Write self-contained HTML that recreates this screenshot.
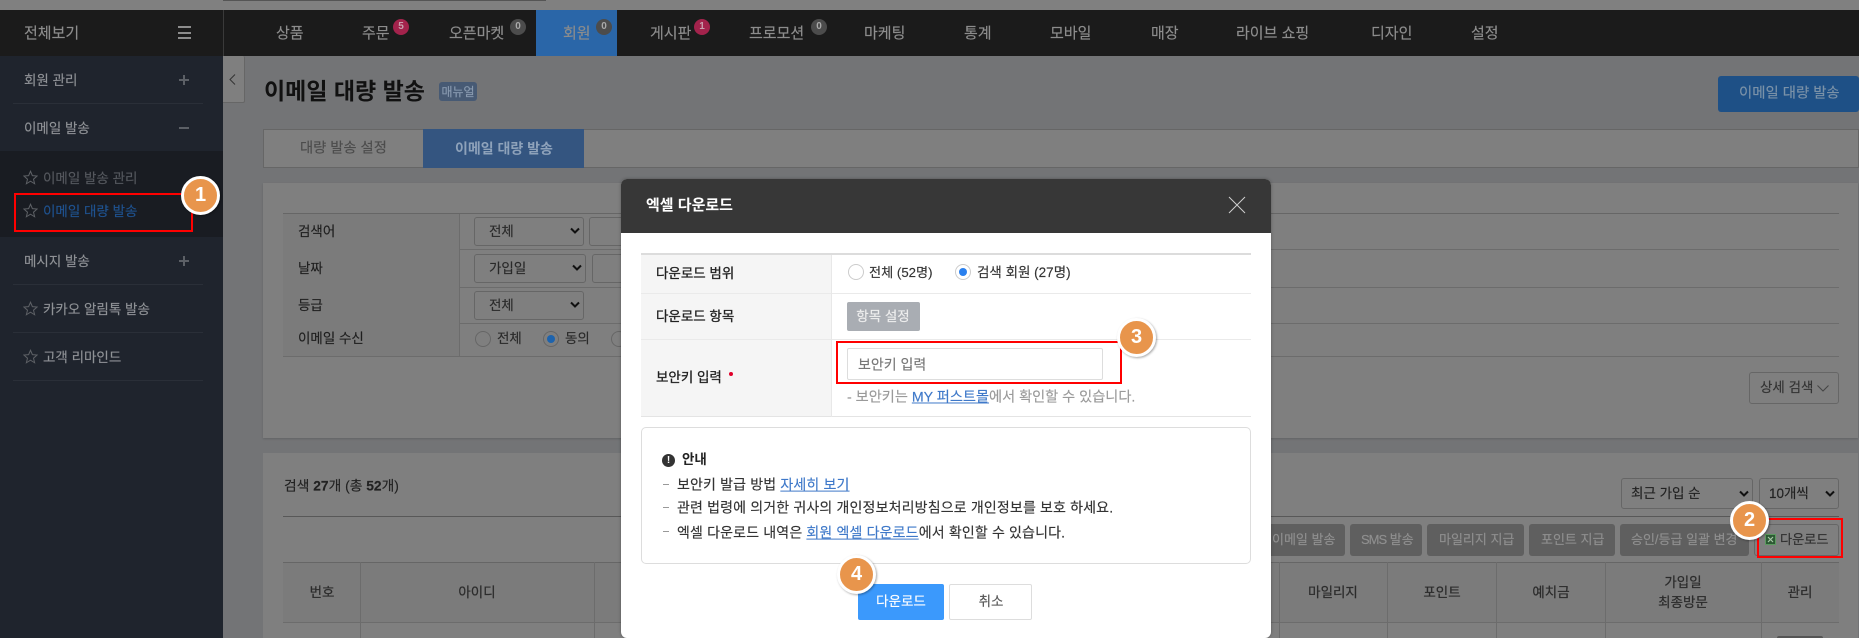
<!DOCTYPE html>
<html lang="ko"><head><meta charset="utf-8"><title>엑셀 다운로드</title>
<style>
html,body{margin:0;padding:0;width:1859px;height:638px;overflow:hidden;background:#737476}
body{position:relative;font-family:"Liberation Sans","Noto Sans CJK KR",sans-serif;font-size:13px;color:#2a2a2a}
div,span,svg{box-sizing:border-box}
.b{position:absolute}
.t{position:absolute;white-space:nowrap;transform:translateY(calc(-50% + 1px));line-height:1.2;-webkit-text-stroke:.15px currentColor}
.c{transform:translate(-50%,calc(-50% + 1px));text-align:center}
.nav{font-size:15px;color:#8d8d8d;top:33px}
.bd{position:absolute;width:16px;height:16px;border-radius:50%;top:19px;font-size:10px;line-height:16px;text-align:center;font-weight:bold;color:#a9a9a9;background:#4c4c4c}
.bd.r{background:#a3234c;color:#c9a0ae}
.side{font-size:13.5px;color:#8f9296;left:24px}
.dv{position:absolute;left:13px;width:190px;height:1px;background:#2a2f38}
.hl{position:absolute;left:283px;width:1556px;height:1px;background:#666}
.sel{position:absolute;border:1px solid #666;border-radius:3px;background:#7f7f7f}
.rd{position:absolute;width:16px;height:16px;border-radius:50%;border:1px solid #666}
.rd.on::after{content:"";position:absolute;left:3px;top:3px;width:8px;height:8px;border-radius:50%;background:#1d63ad}
.btn{position:absolute;top:524px;height:32px;background:#5f5f5f;border-radius:3px}
.bt{color:#8f8f8f;font-size:13px;top:540px}
.th{font-size:13.5px;color:#2c2c2c;-webkit-text-stroke:.25px currentColor}
.num{position:absolute;width:39px;height:39px;border-radius:50%;background:#e8954c;border:3px solid #fff;box-shadow:1px 1px 2px rgba(0,0,0,.35);color:#fff;font-size:20px;font-weight:bold;text-align:center;line-height:33px;z-index:9}
.red{position:absolute;border:2px solid #f00;z-index:8}
.mrd{position:absolute;width:16px;height:16px;border-radius:50%;border:1px solid #ccc;background:#fff}
a{color:#3f79c9;text-decoration:underline}
.ln{font-size:14px;color:#333;letter-spacing:.15px}
.lb{font-size:13.5px;color:#222;-webkit-text-stroke:.3px currentColor}
.ds{position:absolute;left:663px;width:6px;height:1px;background:#999}
</style></head><body>

<!-- top strip -->
<div class="b" style="left:0;top:0;width:1859px;height:10px;background:#808080"></div>
<div class="b" style="left:223px;top:0;width:323px;height:1px;background:#555"></div>

<!-- top nav -->
<div class="b" style="left:0;top:10px;width:1859px;height:46px;background:#1b1b1b"></div>
<div class="b" style="left:223px;top:10px;width:1px;height:46px;background:#3a3a3a"></div>
<div class="b" style="left:536px;top:10px;width:81px;height:46px;background:#2a66a8"></div>
<div class="t nav" style="left:24px">전체보기</div>
<div class="b" style="left:178px;top:26px;width:13px;height:2px;background:#8d8d8d"></div>
<div class="b" style="left:178px;top:32px;width:13px;height:2px;background:#8d8d8d"></div>
<div class="b" style="left:178px;top:37px;width:13px;height:2px;background:#8d8d8d"></div>
<div class="t nav" style="left:276px">상품</div>
<div class="t nav" style="left:362px">주문</div><div class="bd r" style="left:393px">5</div>
<div class="t nav" style="left:449px">오픈마켓</div><div class="bd" style="left:510px">0</div>
<div class="t nav" style="left:563px">회원</div><div class="bd" style="left:596px">0</div>
<div class="t nav" style="left:650px">게시판</div><div class="bd r" style="left:694px">1</div>
<div class="t nav" style="left:749px">프로모션</div><div class="bd" style="left:811px">0</div>
<div class="t nav" style="left:864px">마케팅</div>
<div class="t nav" style="left:964px">통계</div>
<div class="t nav" style="left:1050px">모바일</div>
<div class="t nav" style="left:1151px">매장</div>
<div class="t nav" style="left:1236px">라이브 쇼핑</div>
<div class="t nav" style="left:1371px">디자인</div>
<div class="t nav" style="left:1471px">설정</div>

<!-- sidebar -->
<div class="b" style="left:0;top:56px;width:223px;height:582px;background:#1f242d"></div>
<div class="b" style="left:0;top:151px;width:223px;height:86px;background:#191c22"></div>
<div class="t side" style="top:80px">회원 관리</div>
<div class="b" style="left:179px;top:79px;width:10px;height:2px;background:#5c6066"></div>
<div class="b" style="left:183px;top:75px;width:2px;height:10px;background:#5c6066"></div>
<div class="dv" style="top:103px"></div>
<div class="t side" style="top:128px">이메일 발송</div>
<div class="b" style="left:179px;top:127px;width:10px;height:2px;background:#5c6066"></div>
<svg class="b" style="left:23px;top:170px" width="15" height="15" viewBox="0 0 24 24" fill="none" stroke="#5e6166" stroke-width="1.6"><path d="M12 2l3 7 7.5.7-5.7 5 1.8 7.3L12 18l-6.6 4 1.8-7.3-5.7-5L9 9z"/></svg>
<div class="t side" style="left:43px;top:178px;color:#55585e">이메일 발송 관리</div>
<svg class="b" style="left:23px;top:203px" width="15" height="15" viewBox="0 0 24 24" fill="none" stroke="#5e6166" stroke-width="1.6"><path d="M12 2l3 7 7.5.7-5.7 5 1.8 7.3L12 18l-6.6 4 1.8-7.3-5.7-5L9 9z"/></svg>
<div class="t side" style="left:43px;top:211px;color:#1f528f">이메일 대량 발송</div>
<div class="t side" style="top:261px">메시지 발송</div>
<div class="b" style="left:179px;top:260px;width:10px;height:2px;background:#5c6066"></div>
<div class="b" style="left:183px;top:256px;width:2px;height:10px;background:#5c6066"></div>
<div class="dv" style="top:284px"></div>
<svg class="b" style="left:23px;top:301px" width="15" height="15" viewBox="0 0 24 24" fill="none" stroke="#5e6166" stroke-width="1.6"><path d="M12 2l3 7 7.5.7-5.7 5 1.8 7.3L12 18l-6.6 4 1.8-7.3-5.7-5L9 9z"/></svg>
<div class="t side" style="left:43px;top:309px">카카오 알림톡 발송</div>
<div class="dv" style="top:332px"></div>
<svg class="b" style="left:23px;top:349px" width="15" height="15" viewBox="0 0 24 24" fill="none" stroke="#5e6166" stroke-width="1.6"><path d="M12 2l3 7 7.5.7-5.7 5 1.8 7.3L12 18l-6.6 4 1.8-7.3-5.7-5L9 9z"/></svg>
<div class="t side" style="left:43px;top:357px">고객 리마인드</div>
<div class="dv" style="top:380px"></div>

<!-- collapse handle -->
<div class="b" style="left:223px;top:56px;width:22px;height:47px;background:#7f7f7f;border:1px solid #666;border-left:0;border-top:0;border-radius:0 2px 2px 0"></div>
<svg class="b" style="left:229px;top:74px" width="7" height="11" viewBox="0 0 7 11" fill="none" stroke="#333"><path d="M6 .5L1 5.5l5 5"/></svg>

<!-- title -->
<div class="t" style="left:264px;top:91px;font-size:23px;font-weight:bold;color:#111;-webkit-text-stroke:0">이메일 대량 발송</div>
<div class="b" style="left:439px;top:82px;width:38px;height:19px;background:#475a74;border-radius:3px"></div>
<div class="t c" style="left:458px;top:91px;font-size:12px;color:#8a9bb0">매뉴얼</div>
<div class="b" style="left:1718px;top:76px;width:141px;height:36px;background:#1e5086;border-radius:3px"></div>
<div class="t" style="left:1739px;top:93px;font-size:14.4px;color:#7b92a8">이메일 대량 발송</div>

<!-- tabs -->
<div class="b" style="left:263px;top:129px;width:1596px;height:39px;background:#7f7f7f;border:1px solid #666"></div>
<div class="b" style="left:423px;top:129px;width:161px;height:39px;background:#345580"></div>
<div class="t" style="left:300px;top:148px;font-size:14.3px;color:#4c4c4c">대량 발송 설정</div>
<div class="t" style="left:455px;top:148px;font-size:14px;color:#8ea2ba;font-weight:bold;-webkit-text-stroke:0">이메일 대량 발송</div>

<!-- search panel -->
<div class="b" style="left:263px;top:183px;width:1595px;height:255px;background:#7f7f7f;box-shadow:0 1px 2px rgba(0,0,0,.15)"></div>
<div class="hl" style="top:213px"></div>
<div class="hl" style="top:249px;background:#6c6c6c"></div>
<div class="hl" style="top:287px;background:#6c6c6c"></div>
<div class="hl" style="top:323px;background:#6c6c6c"></div>
<div class="hl" style="top:356px;background:#6c6c6c"></div>
<div class="b" style="left:283px;top:214px;width:176px;height:142px;background:#7b7b7b"></div>
<div class="b" style="left:459px;top:214px;width:1px;height:142px;background:#6c6c6c"></div>
<div class="t" style="left:298px;top:231px;font-size:13.5px;color:#1f1f1f">검색어</div>
<div class="t" style="left:298px;top:268px;font-size:13.5px;color:#1f1f1f">날짜</div>
<div class="t" style="left:298px;top:305px;font-size:13.5px;color:#1f1f1f">등급</div>
<div class="t" style="left:298px;top:338px;font-size:13.5px;color:#1f1f1f">이메일 수신</div>

<div class="sel" style="left:474px;top:217px;width:110px;height:29px"></div>
<div class="t" style="left:489px;top:231px;font-size:13.5px">전체</div>
<svg class="b" style="left:570px;top:227px" width="10" height="8" viewBox="0 0 10 8" fill="none" stroke="#111" stroke-width="2"><path d="M1 1.5l4 4 4-4"/></svg>
<div class="sel" style="left:589px;top:217px;width:60px;height:29px"></div>
<div class="sel" style="left:474px;top:254px;width:112px;height:29px"></div>
<div class="t" style="left:489px;top:268px;font-size:13.5px">가입일</div>
<svg class="b" style="left:572px;top:264px" width="10" height="8" viewBox="0 0 10 8" fill="none" stroke="#111" stroke-width="2"><path d="M1 1.5l4 4 4-4"/></svg>
<div class="sel" style="left:592px;top:254px;width:60px;height:29px"></div>
<div class="sel" style="left:474px;top:291px;width:110px;height:29px"></div>
<div class="t" style="left:489px;top:305px;font-size:13.5px">전체</div>
<svg class="b" style="left:570px;top:301px" width="10" height="8" viewBox="0 0 10 8" fill="none" stroke="#111" stroke-width="2"><path d="M1 1.5l4 4 4-4"/></svg>

<div class="rd" style="left:475px;top:331px"></div>
<div class="t" style="left:497px;top:338px;font-size:13.5px">전체</div>
<div class="rd on" style="left:543px;top:331px"></div>
<div class="t" style="left:565px;top:338px;font-size:13.5px">동의</div>
<div class="rd" style="left:611px;top:331px"></div>

<div class="sel" style="left:1749px;top:372px;width:90px;height:32px"></div>
<div class="t" style="left:1760px;top:387px;font-size:13.5px;color:#333">상세 검색</div>
<svg class="b" style="left:1817px;top:385px" width="12" height="7" viewBox="0 0 12 7" fill="none" stroke="#444"><path d="M.5.5L6 6 11.5.5"/></svg>

<!-- list panel -->
<div class="b" style="left:263px;top:453px;width:1595px;height:185px;background:#7f7f7f"></div>
<div class="t" style="left:284px;top:486px;font-size:13.8px;color:#222">검색 <b>27</b>개 (총 <b>52</b>개)</div>
<div class="hl" style="top:516px;background:#585858"></div>

<div class="sel" style="left:1621px;top:478px;width:132px;height:31px"></div>
<div class="t" style="left:1631px;top:493px;font-size:13.5px;color:#222">최근 가입 순</div>
<svg class="b" style="left:1739px;top:490px" width="10" height="8" viewBox="0 0 10 8" fill="none" stroke="#111" stroke-width="2"><path d="M1 1.5l4 4 4-4"/></svg>
<div class="sel" style="left:1759px;top:478px;width:80px;height:31px"></div>
<div class="t" style="left:1769px;top:493px;font-size:13.5px;color:#222">10개씩</div>
<svg class="b" style="left:1825px;top:490px" width="10" height="8" viewBox="0 0 10 8" fill="none" stroke="#111" stroke-width="2"><path d="M1 1.5l4 4 4-4"/></svg>

<div class="btn" style="left:1260px;width:85px"></div>
<div class="t bt" style="left:1272px;top:539px">이메일 발송</div>
<div class="btn" style="left:1350px;width:72px"></div>
<div class="t bt" style="left:1361px;top:539px"><span style="letter-spacing:-1px">SMS</span> 발송</div>
<div class="btn" style="left:1427px;width:97px"></div>
<div class="t bt" style="left:1439px;top:539px">마일리지 지급</div>
<div class="btn" style="left:1529px;width:86px"></div>
<div class="t bt" style="left:1541px;top:539px">포인트 지급</div>
<div class="btn" style="left:1620px;width:129px"></div>
<div class="t bt" style="left:1631px;top:539px">승인/등급 일괄 변경</div>
<div class="sel" style="left:1754px;top:524px;width:85px;height:32px"></div>
<svg class="b" style="left:1765px;top:534px" width="11" height="11" viewBox="0 0 11 11"><rect x=".5" y=".5" width="10" height="10" fill="#2d5a34" stroke="#5c9a60"/><path d="M3 3l5 5M8 3L3 8" stroke="#a8c8a8" stroke-width="1.2"/></svg>
<div class="t" style="left:1780px;top:539px;font-size:13.2px;color:#2f2f2f">다운로드</div>

<div class="b" style="left:283px;top:562px;width:1556px;height:61px;background:#7b7b7b;border-top:1px solid #666;border-bottom:1px solid #6c6c6c"></div>
<div class="b" style="left:283px;top:623px;width:1556px;height:15px;background:#7f7f7f"></div>
<div class="b" style="left:360px;top:562px;width:1px;height:76px;background:#6c6c6c"></div>
<div class="b" style="left:594px;top:562px;width:1px;height:76px;background:#6c6c6c"></div>
<div class="b" style="left:1279px;top:562px;width:1px;height:76px;background:#6c6c6c"></div>
<div class="b" style="left:1387px;top:562px;width:1px;height:76px;background:#6c6c6c"></div>
<div class="b" style="left:1496px;top:562px;width:1px;height:76px;background:#6c6c6c"></div>
<div class="b" style="left:1605px;top:562px;width:1px;height:76px;background:#6c6c6c"></div>
<div class="b" style="left:1761px;top:562px;width:1px;height:76px;background:#6c6c6c"></div>
<div class="t c th" style="left:322px;top:592px">번호</div>
<div class="t c th" style="left:477px;top:592px">아이디</div>
<div class="t c th" style="left:1333px;top:592px">마일리지</div>
<div class="t c th" style="left:1442px;top:592px">포인트</div>
<div class="t c th" style="left:1551px;top:592px">예치금</div>
<div class="t c th" style="left:1683px;top:582px">가입일</div>
<div class="t c th" style="left:1683px;top:602px">최종방문</div>
<div class="t c th" style="left:1800px;top:592px">관리</div>
<div class="t" style="left:1631px;top:643px;font-size:13px;color:#333">2022-03-21 17:00</div>
<div class="b" style="left:1777px;top:636px;width:46px;height:2px;background:#555;border-radius:2px 2px 0 0"></div>

<!-- modal -->
<div class="b" style="left:621px;top:179px;width:650px;height:459px;background:#fff;border-radius:6px;box-shadow:0 0 3px rgba(0,0,0,.3)"></div>
<div class="b" style="left:621px;top:179px;width:650px;height:54px;background:#373737;border-radius:6px 6px 0 0"></div>
<div class="t" style="left:646px;top:205px;font-size:15px;font-weight:bold;color:#fff;-webkit-text-stroke:0">엑셀 다운로드</div>
<svg class="b" style="left:1228px;top:196px" width="18" height="18" viewBox="0 0 18 18" stroke="#cfcfcf" fill="none"><path d="M1 1l16 16M17 1L1 17"/></svg>

<div class="b" style="left:641px;top:253px;width:610px;height:2px;background:#dcdcdc"></div>
<div class="b" style="left:641px;top:255px;width:191px;height:162px;background:#f5f5f5"></div>
<div class="b" style="left:641px;top:293px;width:610px;height:1px;background:#eaeaea"></div>
<div class="b" style="left:641px;top:339px;width:610px;height:1px;background:#eaeaea"></div>
<div class="b" style="left:641px;top:416px;width:610px;height:1px;background:#e4e4e4"></div>
<div class="b" style="left:831px;top:255px;width:1px;height:162px;background:#e8e8e8"></div>
<div class="t lb" style="left:656px;top:273px">다운로드 범위</div>
<div class="t lb" style="left:656px;top:316px">다운로드 항목</div>
<div class="t lb" style="left:656px;top:377px">보안키 입력</div>
<div class="b" style="left:729px;top:372px;width:4px;height:4px;border-radius:50%;background:#e0002a"></div>

<div class="mrd" style="left:848px;top:264px"></div>
<div class="t" style="left:869px;top:272px;font-size:13.2px;color:#333">전체 (52명)</div>
<div class="mrd" style="left:955px;top:264px"><span style="position:absolute;left:3px;top:3px;width:8px;height:8px;border-radius:50%;background:#2a80ee"></span></div>
<div class="t" style="left:977px;top:272px;font-size:13.5px;color:#333">검색 회원 (27명)</div>

<div class="b" style="left:847px;top:302px;width:73px;height:29px;background:#a9adb3;border-radius:2px"></div>
<div class="t c" style="left:883px;top:316px;font-size:13.5px;color:#eee">항목 설정</div>

<div class="b" style="left:847px;top:348px;width:256px;height:32px;background:#fff;border:1px solid #ddd;border-radius:2px"></div>
<div class="t" style="left:858px;top:364px;font-size:14px;color:#777">보안키 입력</div>
<div class="t" style="left:847px;top:397px;font-size:14.2px;color:#9a9a9a">- 보안키는 <a>MY 퍼스트몰</a>에서 확인할 수 있습니다.</div>

<div class="b" style="left:641px;top:427px;width:610px;height:137px;border:1px solid #ddd;border-radius:5px"></div>
<div class="b" style="left:662px;top:454px;width:13px;height:13px;border-radius:50%;background:#333;color:#fff;font-size:10px;font-weight:bold;text-align:center;line-height:13px">!</div>
<div class="t" style="left:682px;top:459px;font-size:13.5px;font-weight:bold;color:#222;-webkit-text-stroke:0">안내</div>
<div class="ds" style="top:484px"></div>
<div class="t ln" style="left:677px;top:484px">보안키 발급 방법 <a>자세히 보기</a></div>
<div class="ds" style="top:507px"></div>
<div class="t ln" style="left:677px;top:507px">관련 법령에 의거한 귀사의 개인정보처리방침으로 개인정보를 보호 하세요.</div>
<div class="ds" style="top:531px"></div>
<div class="t ln" style="left:677px;top:532px">엑셀 다운로드 내역은 <a>회원 엑셀 다운로드</a>에서 확인할 수 있습니다.</div>

<div class="b" style="left:858px;top:584px;width:86px;height:36px;background:#3b99fc;border-radius:2px"></div>
<div class="t c" style="left:901px;top:601px;font-size:13.5px;color:#fff">다운로드</div>
<div class="b" style="left:949px;top:584px;width:83px;height:36px;background:#fff;border:1px solid #ddd;border-radius:2px"></div>
<div class="t c" style="left:991px;top:601px;font-size:13.5px;color:#555">취소</div>

<!-- annotations -->
<div class="red" style="left:14px;top:193px;width:179px;height:39px"></div>
<div class="num" style="left:181px;top:176px">1</div>
<div class="red" style="left:1757px;top:518px;width:86px;height:40px"></div>
<div class="num" style="left:1730px;top:501px">2</div>
<div class="red" style="left:836px;top:341px;width:286px;height:43px"></div>
<div class="num" style="left:1117px;top:318px">3</div>
<div class="num" style="left:837px;top:555px">4</div>
</body></html>
